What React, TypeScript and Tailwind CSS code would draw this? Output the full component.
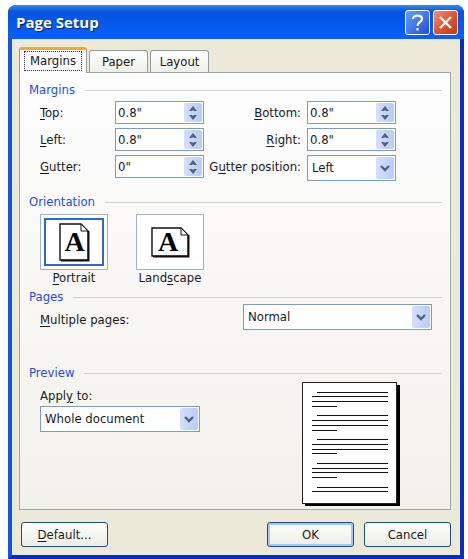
import { useId, useState } from "react";
import type { ReactNode } from "react";

function Key({ children }: { children: ReactNode }) {
  return <span className="underline decoration-1 underline-offset-2">{children}</span>;
}

function Group({ title, className, children }: { title: string; className: string; children: ReactNode }) {
  return (
    <section className={className}>
      <div className="flex h-3.5 items-center gap-2.5">
        <h2 className="text-[13px] leading-[14px] text-[#1f4fd8]">{title}</h2>
        <div className="h-px flex-1 bg-[#d3d1c7]" />
      </div>
      {children}
    </section>
  );
}

function Spinner({ id, initial }: { id: string; initial: number }) {
  const [value, setValue] = useState(`${initial}"`);
  const step = (by: number) =>
    setValue((v) => `${Math.max(0, Math.round(((parseFloat(v) || 0) + by) * 10) / 10)}"`);
  return (
    <div className="flex h-[23px] border border-[#7f9db9] bg-white">
      <input
        id={id}
        value={value}
        onChange={(e) => setValue(e.target.value)}
        className="w-0 min-w-0 flex-1 pl-0.5 text-[13px] leading-4 outline-none"
      />
      <div className="my-px mr-px flex w-[18px] flex-col rounded-xs bg-linear-to-r from-[#d3dffc] to-[#b9cdf9] text-[#4d6185]">
        <button type="button" aria-label="Increase" onClick={() => step(0.1)} className="flex flex-1 items-end justify-center pb-0.5">
          <svg width="8" height="5" viewBox="0 0 8 5"><path d="M0 5L4 0L8 5H5L4 4L3 5Z" fill="currentColor" /></svg>
        </button>
        <button type="button" aria-label="Decrease" onClick={() => step(-0.1)} className="flex flex-1 items-start justify-center pt-0.5">
          <svg width="8" height="5" viewBox="0 0 8 5"><path d="M0 0L4 5L8 0H5L4 1L3 0Z" fill="currentColor" /></svg>
        </button>
      </div>
    </div>
  );
}

function Dropdown({ id, options }: { id: string; options: string[] }) {
  return (
    <div className="grid h-[26px] items-center border border-[#7f9db9] bg-white">
      <select id={id} className="col-start-1 row-start-1 h-full w-full appearance-none bg-transparent pl-1 text-[13px] outline-none">
        {options.map((o) => (
          <option key={o}>{o}</option>
        ))}
      </select>
      <span className="pointer-events-none col-start-1 row-start-1 mr-px flex h-[22px] w-[18px] items-center justify-center justify-self-end rounded-xs bg-linear-to-r from-[#d3dffc] to-[#b9cdf9]">
        <svg width="10" height="7" viewBox="0 0 10 7" fill="none" stroke="#4d6185" strokeWidth="2.4"><path d="M1 1L5 5L9 1" /></svg>
      </span>
    </div>
  );
}

function PageIcon({ landscape }: { landscape: boolean }) {
  return landscape ? (
    <svg width="39" height="31" viewBox="0 0 39 31" className="overflow-visible">
      <path d="M1 1H30L37 8V29H1Z" fill="#fff" stroke="#111" strokeWidth="1.4" />
      <path d="M37.6 8V29.6H2" fill="none" stroke="#111" strokeWidth="1.8" />
      <path d="M30 1V8H37Z" fill="#fff" stroke="#111" />
      <text x="17" y="24" textAnchor="middle" fontFamily="Liberation Serif, serif" fontWeight="bold" fontSize="28">A</text>
    </svg>
  ) : (
    <svg width="31" height="39" viewBox="0 0 31 39" className="overflow-visible">
      <path d="M1 1H22L29 8V37H1Z" fill="#fff" stroke="#111" strokeWidth="1.4" />
      <path d="M29.6 8V37.6H2" fill="none" stroke="#111" strokeWidth="1.8" />
      <path d="M22 1V8H29Z" fill="#fff" stroke="#111" />
      <text x="15.5" y="28" textAnchor="middle" fontFamily="Liberation Serif, serif" fontWeight="bold" fontSize="28">A</text>
    </svg>
  );
}

function OrientationButton({ landscape, selected, onSelect, children }: { landscape: boolean; selected: boolean; onSelect: () => void; children: ReactNode }) {
  return (
    <button type="button" aria-pressed={selected} onClick={onSelect} className="flex w-[68px] flex-col items-center">
      <span className="flex h-14 w-full border border-[#9db3cc] bg-white p-[3px]">
        <span className={selected ? "flex flex-1 items-center justify-center border-2 border-[#316ac5]" : "flex flex-1 items-center justify-center border-2 border-transparent"}>
          <PageIcon landscape={landscape} />
        </span>
      </span>
      <span className="text-[13px] leading-4 whitespace-nowrap">{children}</span>
    </button>
  );
}

const previewLines = Array.from({ length: 22 }, (_, i) => i).filter((i) => i % 5 !== 4);

function PagePreview() {
  return (
    <svg width="98" height="124" viewBox="0 0 98 124" role="img" aria-label="Page preview" shapeRendering="crispEdges">
      <rect x="3" y="3" width="95" height="121" fill="#000" />
      <rect x="0.5" y="0.5" width="94" height="121" fill="#fff" stroke="#222" />
      {previewLines.map((i) => {
        const kind = i % 5;
        const x = kind === 0 ? 15 : 10;
        const end = kind === 3 ? 35 : 86;
        return <rect key={i} x={x} y={Math.round(9.5 + i * 4.76)} width={end - x} height="1" fill="#111" />;
      })}
    </svg>
  );
}

const tabs = ["Margins", "Paper", "Layout"];

export default function App() {
  const id = useId();
  const [tab, setTab] = useState("Margins");
  const [landscape, setLandscape] = useState(false);
  const label = "text-[13px] leading-4 whitespace-nowrap";
  const button = "h-[25px] w-[87px] rounded-[3px] border border-[#1d4f7c] bg-linear-to-b from-white to-[#edece4] text-[13px] leading-4";

  return (
    <main className="bg-white pt-[5px] pr-1 pl-2 font-['DejaVu_Sans_Condensed','DejaVu_Sans',sans-serif] text-[#1a1a1a]">
      <div className="overflow-hidden rounded-t-lg bg-[#0a3fd6]">
        <header className="flex h-[34px] items-center gap-[3px] bg-linear-to-b from-[#2f8bf5] via-[#0553e0] via-20% to-[#0561fb] pr-1.5 pl-2">
          <h1 className="flex-1 font-['Open_Sans',sans-serif] text-[15px] font-bold text-white [text-shadow:1px_1px_1px_#0a246a]">Page Setup</h1>
          <button type="button" aria-label="Help" className="flex size-[25px] items-center justify-center rounded-[3px] border border-white bg-linear-to-br from-[#6f9bf5] to-[#1c4fd8]">
            <svg width="13" height="17" viewBox="0 0 13 17" fill="none" stroke="#fff" strokeWidth="2.2">
              <path d="M2 5C2 0.5 11 0.5 11 5C11 8 6.5 8 6.5 12M6.5 14V16.5" />
            </svg>
          </button>
          <button type="button" aria-label="Close" className="flex size-[25px] items-center justify-center rounded-[3px] border border-white bg-linear-to-br from-[#f0907a] via-[#e25330] to-[#c2391a]">
            <svg width="15" height="15" viewBox="0 0 15 15" stroke="#fff" strokeWidth="2.4"><path d="M2 2L13 13M13 2L2 13" /></svg>
          </button>
        </header>

        <div className="border-x-4 border-b-4 border-r-[#0a2cc0] border-b-[#0a2cc0] border-l-[#1455e8] bg-[#ece9d8] pt-2 pr-[9px] pb-2 pl-[7px]">
          <div role="tablist" className="flex items-end gap-0.5">
            {tabs.map((t) =>
              t === tab ? (
                <button key={t} type="button" role="tab" aria-selected="true" className="z-10 -mb-px h-[26px] w-[68px] rounded-t-[3px] border-x border-t-3 border-x-[#919b9c] border-t-[#f5a830] bg-[#fcfcfe] px-1 pb-0.5">
                  <span className="flex h-5 items-center justify-center border border-dotted border-[#333] text-[13px]">{t}</span>
                </button>
              ) : (
                <button key={t} type="button" role="tab" aria-selected="false" onClick={() => setTab(t)} className="h-[22px] w-[59px] rounded-t-[3px] border-x border-t border-[#919b9c] bg-linear-to-b from-white to-[#f0efe8] text-[13px] leading-4">
                  {t}
                </button>
              ),
            )}
          </div>

          <div role="tabpanel" className="border border-[#9aa9a8] bg-linear-to-b from-[#fdfdfe] to-[#f3f1eb] pr-2 pb-[3px] pl-[9px] pt-2.5">
            <Group title="Margins" className="">
              <div className="mt-1 grid grid-cols-[75px_89px_1fr_89px_46px] items-start gap-y-1 pl-[11px]">
                <label htmlFor={id + "t"} className={`${label} pt-1`}><Key>T</Key>op:</label>
                <Spinner id={id + "t"} initial={0.8} />
                <label htmlFor={id + "b"} className={`${label} pt-1 pr-1.5 text-right`}><Key>B</Key>ottom:</label>
                <Spinner id={id + "b"} initial={0.8} />
                <span />
                <label htmlFor={id + "l"} className={`${label} pt-1`}><Key>L</Key>eft:</label>
                <Spinner id={id + "l"} initial={0.8} />
                <label htmlFor={id + "r"} className={`${label} pt-1 pr-1.5 text-right`}><Key>R</Key>ight:</label>
                <Spinner id={id + "r"} initial={0.8} />
                <span />
                <label htmlFor={id + "g"} className={`${label} pt-1`}><Key>G</Key>utter:</label>
                <Spinner id={id + "g"} initial={0} />
                <label htmlFor={id + "p"} className={`${label} pt-1 pr-1.5 text-right`}>G<Key>u</Key>tter position:</label>
                <Dropdown id={id + "p"} options={["Left", "Top"]} />
              </div>
            </Group>

            <Group title="Orientation" className="mt-3.5">
              <div className="mt-[5px] flex gap-7 pl-[11px]">
                <OrientationButton landscape={false} selected={!landscape} onSelect={() => setLandscape(false)}><Key>P</Key>ortrait</OrientationButton>
                <OrientationButton landscape selected={landscape} onSelect={() => setLandscape(true)}>Land<Key>s</Key>cape</OrientationButton>
              </div>
            </Group>

            <Group title="Pages" className="mt-1">
              <div className="flex justify-between pr-2.5 pl-[11px]">
                <label htmlFor={id + "m"} className={`${label} pt-2`}><Key>M</Key>ultiple pages:</label>
                <div className="w-[189px]">
                  <Dropdown id={id + "m"} options={["Normal", "Mirror margins", "2 pages per sheet", "Book fold"]} />
                </div>
              </div>
            </Group>

            <Group title="Preview" className="mt-9">
              <div className="mt-0.5 flex justify-between pr-[42px] pl-[11px]">
                <div className="w-40 pt-1.5">
                  <label htmlFor={id + "a"} className={`${label} mb-0.5 block`}>Appl<Key>y</Key> to:</label>
                  <Dropdown id={id + "a"} options={["Whole document", "This point forward"]} />
                </div>
                <PagePreview />
              </div>
            </Group>
          </div>

          <footer className="mt-3 flex gap-2.5 pl-0.5">
            <button type="button" className={`${button} mr-auto`}><Key>D</Key>efault...</button>
            <button type="button" className={`${button} shadow-[inset_0_0_0_2px_#a9c4f5]`}>OK</button>
            <button type="button" className={button}>Cancel</button>
          </footer>
        </div>
      </div>
    </main>
  );
}
